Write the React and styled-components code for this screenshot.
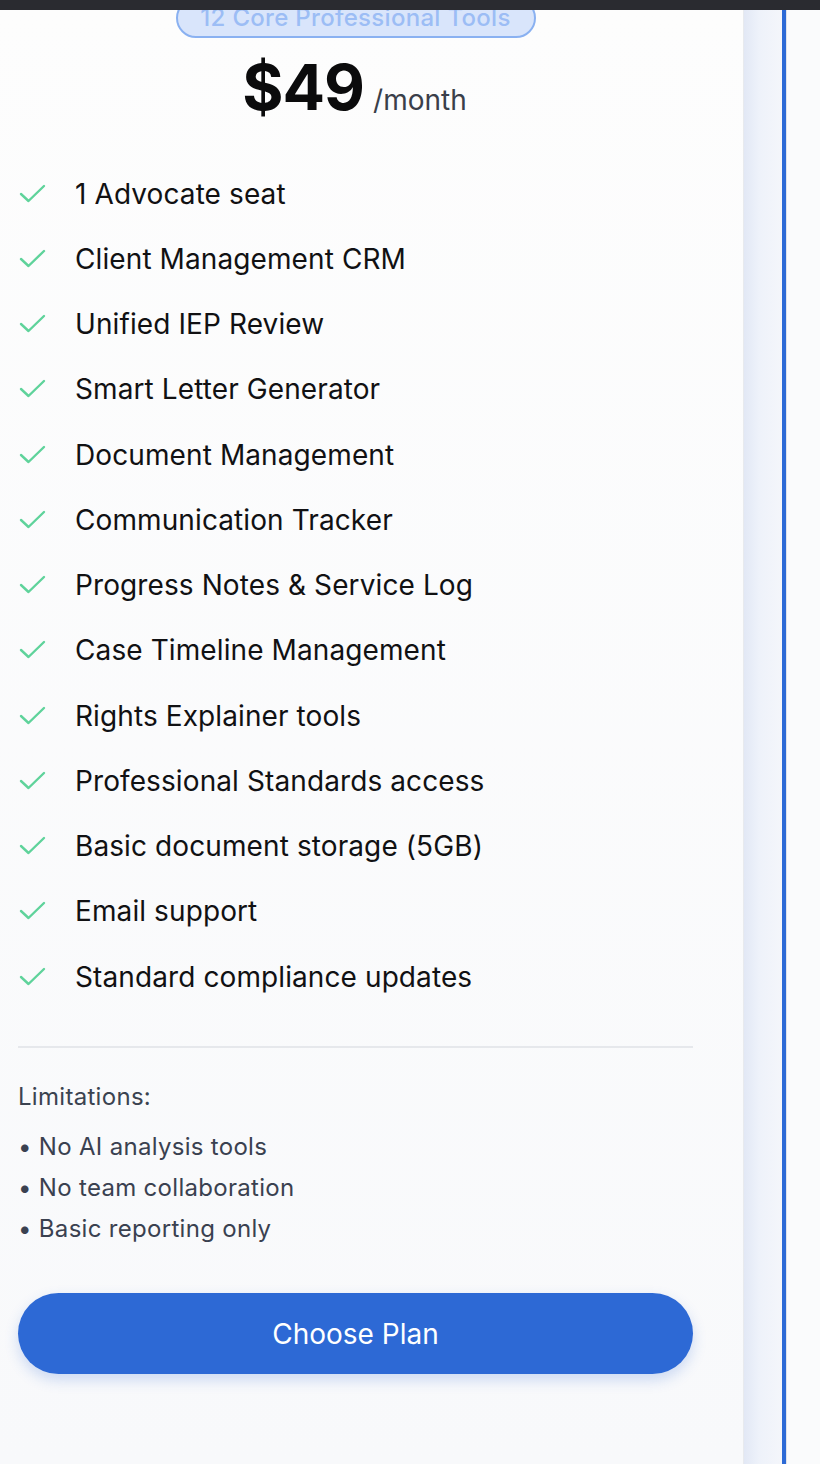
import React from 'react';
import styled, { createGlobalStyle } from 'styled-components';

const features = [
    '1 Advocate seat',
    'Client Management CRM',
    'Unified IEP Review',
    'Smart Letter Generator',
    'Document Management',
    'Communication Tracker',
    'Progress Notes & Service Log',
    'Case Timeline Management',
    'Rights Explainer tools',
    'Professional Standards access',
    'Basic document storage (5GB)',
    'Email support',
    'Standard compliance updates',
];

const limitations = [
    'No AI analysis tools',
    'No team collaboration',
    'Basic reporting only',
];

function CheckIcon() {
    return (
        <svg width="28" height="20" viewBox="0 0 28 20" fill="none">
            <polyline
                points="3,10 10.5,17 26,2"
                stroke="#5fd39b"
                strokeWidth="2.4"
                strokeLinecap="round"
                strokeLinejoin="round"
            />
        </svg>
    );
}

function App() {
    return (
        <>
            <GlobalStyle />
            <TopBar />
            <Stage>
                <PlanCard>
                    <Badge>12 Core Professional Tools</Badge>
                    <PriceRow>
                        <Amount>$49</Amount>
                        <Period>/month</Period>
                    </PriceRow>

                    <FeatureList>
                        {features.map((f) => (
                            <Feature key={f}>
                                <CheckSlot>
                                    <CheckIcon />
                                </CheckSlot>
                                <span>{f}</span>
                            </Feature>
                        ))}
                    </FeatureList>

                    <Divider />

                    <LimitTitle>Limitations:</LimitTitle>
                    <LimitList>
                        {limitations.map((l) => (
                            <LimitItem key={l}>• {l}</LimitItem>
                        ))}
                    </LimitList>

                    <ChooseButton>Choose Plan</ChooseButton>
                </PlanCard>
                <Gutter />
                <NextCard />
            </Stage>
        </>
    );
}

// Styled components
const GlobalStyle = createGlobalStyle`
  html, body {
    margin: 0;
    padding: 0;
    background: #fafbfc;
  }
  body {
    font-family: Inter, "Noto Sans", "Liberation Sans", sans-serif;
    -webkit-font-smoothing: antialiased;
  }
`;

const TopBar = styled.div`
  height: 10px;
  background: #2a2b30;
`;

const Stage = styled.div`
  display: flex;
  height: 1454px;
  overflow: hidden;
`;

const PlanCard = styled.section`
  flex: 0 0 744px;
  box-sizing: border-box;
  padding: 0 50px 0 18px;
  display: flex;
  flex-direction: column;
  background: linear-gradient(to bottom, #fdfdfd, #f8f9fb);
  border-right: 1px solid #e8eaee;
`;

const Badge = styled.div`
  align-self: center;
  box-sizing: border-box;
  margin-top: -12px;
  width: 360px;
  height: 40px;
  padding-top: 1px;
  border: 2px solid #8ab1f1;
  border-radius: 20px;
  background: #d9e5fb;
  color: #9cbdf5;
  font-size: 24px;
  font-weight: 500;
  line-height: 34px;
  letter-spacing: 0.3px;
  text-align: center;
  white-space: nowrap;
`;

const PriceRow = styled.div`
  display: flex;
  justify-content: center;
  align-items: baseline;
  gap: 9px;
  margin-top: 18px;
  padding-right: 2px;
  line-height: 1;
`;

const Amount = styled.span`
  font-size: 63px;
  font-weight: 700;
  color: #0b0b0c;
  letter-spacing: -1px;
`;

const Period = styled.span`
  font-size: 28px;
  color: #3a3f4a;
`;

const FeatureList = styled.ul`
  list-style: none;
  margin: 42px 0 0;
  padding: 0;
`;

const Feature = styled.li`
  display: flex;
  align-items: center;
  height: 65.25px;
  font-size: 28px;
  letter-spacing: 0.1px;
  color: #111113;
`;

const CheckSlot = styled.span`
  display: flex;
  width: 57px;
`;

const Divider = styled.hr`
  margin: 37px 0 0;
  border: none;
  height: 2px;
  background: #e6e8ec;
`;

const LimitTitle = styled.div`
  margin-top: 35px;
  font-size: 24px;
  line-height: 28px;
  letter-spacing: 0.3px;
  color: #3b4350;
`;

const LimitList = styled.ul`
  list-style: none;
  margin: 22px 0 0;
  padding: 0;
  display: flex;
  flex-direction: column;
  gap: 13px;
`;

const LimitItem = styled.li`
  font-size: 24px;
  line-height: 28px;
  letter-spacing: 0.3px;
  color: #3a4150;
`;

const ChooseButton = styled.button`
  margin-top: 50px;
  height: 81px;
  border: none;
  border-radius: 41px;
  background: #2d69d5;
  color: #ffffff;
  font-family: inherit;
  font-size: 28px;
  font-weight: 400;
  box-shadow: 0 6px 14px rgba(45, 105, 213, 0.22);
  cursor: pointer;
`;

const Gutter = styled.div`
  flex: 0 0 38px;
  background: linear-gradient(to right, #e2e8f5, #eef2fa 40%, #f4f6fb);
`;

const NextCard = styled.div`
  flex: 1;
  border-left: 4px solid #2d6ad6;
  box-shadow: inset 1px 0 0 #dfe3ea;
  background: #fafbfc;
`;

export default App;
